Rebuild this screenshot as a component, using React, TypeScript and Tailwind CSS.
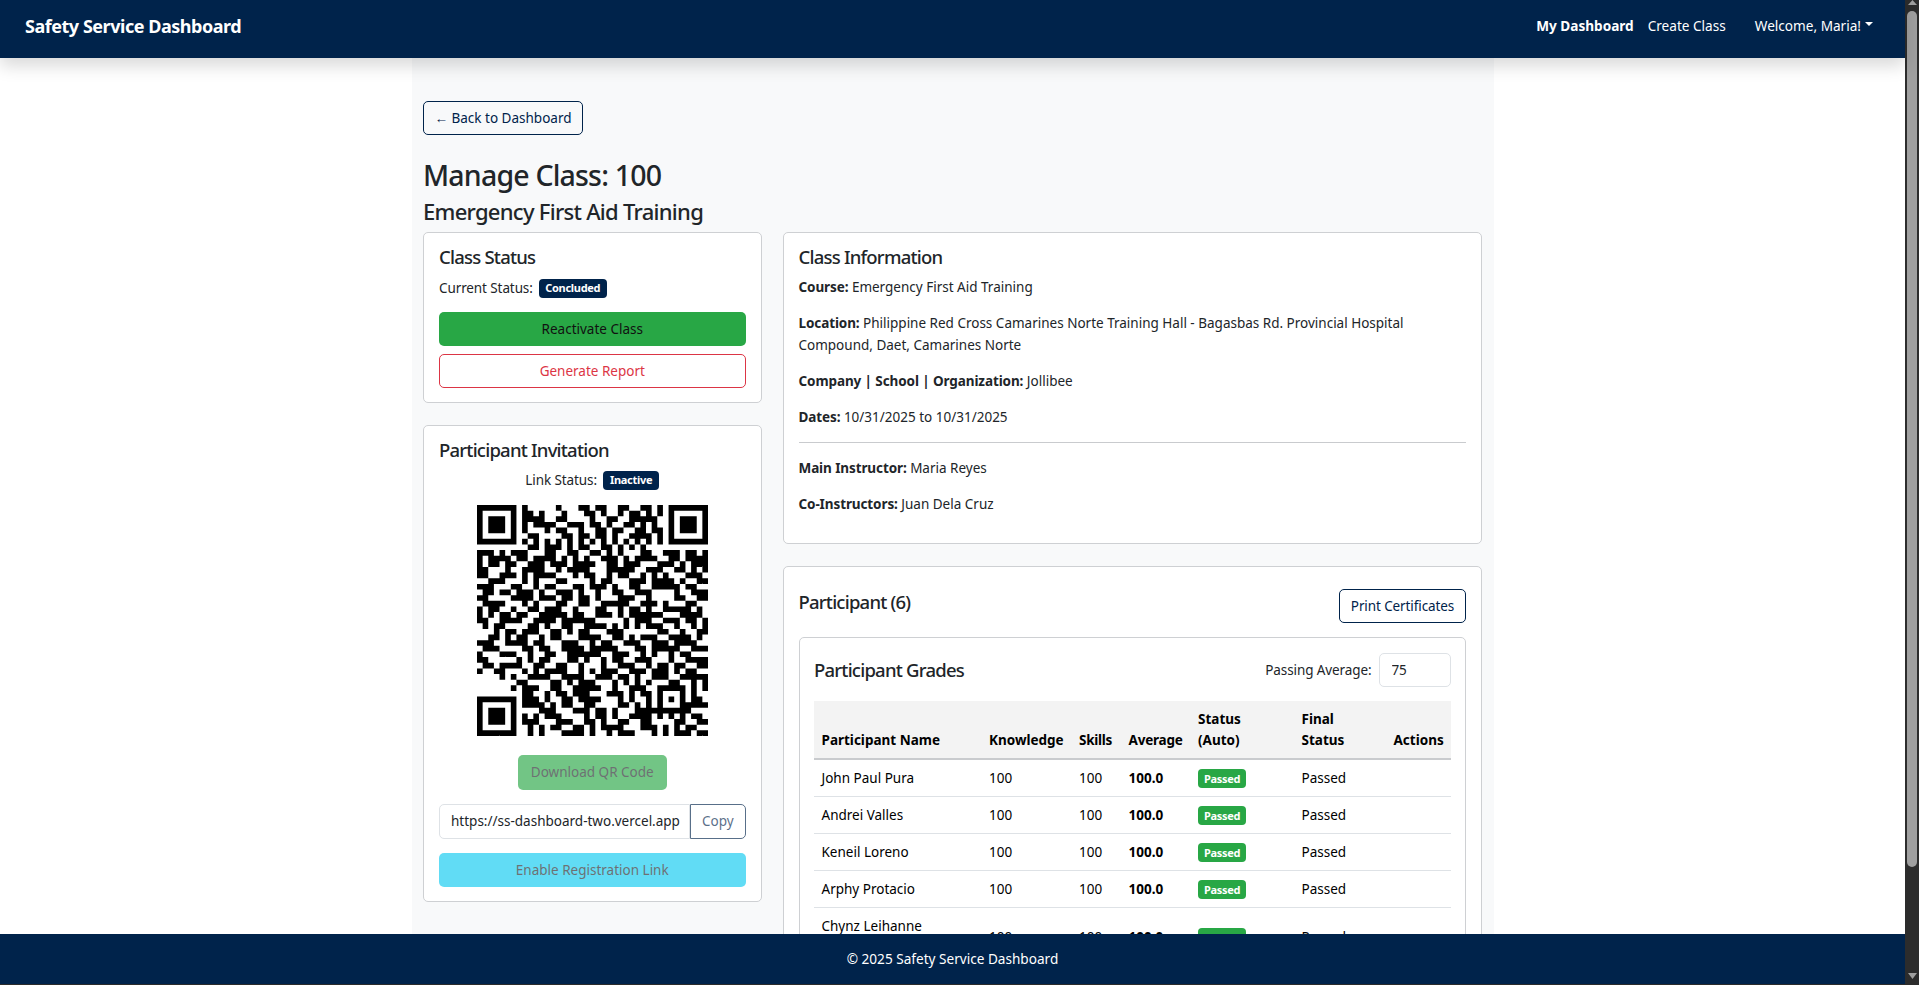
import React from "react";

const QR_ROWS = [
  "00000000111100100011100001100100001000000",
  "00000000100100010000110001011000000000000",
  "00000000111000110011000110011100000000000",
  "00000000011011001110011100110100000000000",
  "00000000110010110001110011001110000000000",
  "00000000011100011001101110011100000000000",
  "00000000101010101010101010101010100000000",
  "00000000011000111011001110011000000000000",
  "11111011100011011100110111000110011101100",
  "01100101101100011001001101110011001100111",
  "00110110011111100111100110001100111001100",
  "01110000111110011011000111011011100110011",
  "11001101110011000111110001100110011001110",
  "00111001111000110011101100011101100110011",
  "11100011001111000111001110011001110001100",
  "01101110011000111001110011001110011100111",
  "11000011100111011000111001110011001110011",
  "01111000111100110011100011100110110001100",
  "10011100011000111100011001101110011110011",
  "11000111100110001110011100110011100011100",
  "01110011001111100011100011100110011100111",
  "10011110011000111001111001100011100111000",
  "11001100111001100111000111011100110011110",
  "00110011100111000111110011000111001100011",
  "11100110011100011100011100111001110011100",
  "01110011100110011111001110001110011100111",
  "10001110011111001100110011100111000111000",
  "11000011001110001111000111001100111001111",
  "01101110011000110011110001110011100110011",
  "10011001110011110001100110011100110001100",
  "11100110011100011110011100011001110011110",
  "00111001100011100111100011100110001110011",
  "11001110111001100011110011001100000111000",
  "00000000110011100111000111001110000110011",
  "00000000111001100011110001110010000111000",
  "00000000111100111001100011001110110100111",
  "00000000001111000111001110001110000111000",
  "00000000110011100011100110011110000110110",
  "00000000111100111001110001100111111110011",
  "00000000011001100111001111000110001101100",
  "00000000111100011100111001110011100111011",
];

function QrCode() {
  let d = "";
  const inRect = (r: number, c: number, r0: number, c0: number, n: number) => r >= r0 && r < r0 + n && c >= c0 && c < c0 + n;
  for (let r = 0; r < 41; r++) {
    for (let c = 0; c < 41; c++) {
      const flip = (Math.floor(r / 6) + Math.floor(c / 6)) % 2 === 1;
      let on = (flip ? QR_ROWS[c][r] : QR_ROWS[r][c]) === "1";
      if (r === 6 && c > 7 && c < 33) on = c % 2 === 0;
      if (c === 6 && r > 7 && r < 33) on = r % 2 === 0;
      for (const [r0, c0] of [[0, 0], [0, 34], [34, 0]]) {
        if (inRect(r, c, r0 - (r0 ? 1 : 0), c0 - (c0 ? 1 : 0), 8)) on = false;
        if (inRect(r, c, r0, c0, 7)) {
          const dr = r - r0;
          const dc = c - c0;
          on = dr === 0 || dr === 6 || dc === 0 || dc === 6 || (dr >= 2 && dr <= 4 && dc >= 2 && dc <= 4);
        }
      }
      if (inRect(r, c, 32, 32, 5)) {
        const dr = r - 32;
        const dc = c - 32;
        on = dr === 0 || dr === 4 || dc === 0 || dc === 4 || (dr === 2 && dc === 2);
      }
      if (on) d += `M${c} ${r}h1v1h-1z`;
    }
  }
  return (
    <svg viewBox="0 0 41 41" className="block w-[231px] h-[231px]">
      <path d={d} fill="#000" />
    </svg>
  );
}

const card = "bg-white border border-[#ced0d3] rounded-[5px]";
const h5 = "text-[18.5px] leading-[24px] font-medium text-[#212529] tracking-[-0.78px]";

function Info({ label, children, cls = "mb-[14px]" }: { label: string; children: React.ReactNode; cls?: string }) {
  return (
    <p className={`${cls} text-[13.5px] leading-[22px] text-[#212529]`}>
      <b className="font-bold tracking-[-0.1px]">{label}</b> {children}
    </p>
  );
}

const people: [React.ReactNode, number][] = [
  ["John Paul Pura", 37],
  ["Andrei Valles", 37],
  ["Keneil Loreno", 37],
  ["Arphy Protacio", 37],
  [<>Chynz Leihanne<br />&nbsp;</>, 59],
];

export default function App() {
  return (
    <div className="flex h-[985px] w-full overflow-hidden bg-white [font-family:'Noto_Sans',sans-serif]">
      <div className="flex flex-col flex-1 min-w-0 h-full">
        <header className="relative z-10 flex items-center justify-between h-[58px] shrink-0 bg-[#00234b] pl-[25px] pr-[32px] pb-[6px] text-white shadow-[0_8px_16px_rgba(0,0,0,0.15)]">
          <span className="text-[18px] font-bold tracking-[-0.47px]">Safety Service Dashboard</span>
          <nav className="flex items-center text-[13.6px]">
            <span className="font-bold mr-[14px]">My Dashboard</span>
            <span className="mr-[29px]">Create Class</span>
            <span>Welcome, Maria!</span>
            <span className="ml-[4px] border-x-[4px] border-x-transparent border-t-[4px] border-t-white mb-[4px]" />
          </nav>
        </header>

        <main className="flex-1 min-h-0 overflow-hidden">
          <div className="w-[1082px] mx-auto bg-[#f8f9fa] px-[11.5px] pt-[43px] h-full">
            <button className="block h-[34px] w-[160px] rounded-[5px] border border-[#00234b] bg-transparent text-[13.5px] text-[#00234b]">← Back to Dashboard</button>
            <h1 className="mt-[21px] text-[28.5px] leading-[38px] font-medium text-[#212529] tracking-[-0.81px]">Manage Class: 100</h1>
            <h2 className="mt-[3px] text-[22px] leading-[29px] font-medium text-[#212529] tracking-[-0.72px]">Emergency First Aid Training</h2>
            <div className="flex gap-[21px] mt-[6px] items-start">
              <div className="w-[338.5px] shrink-0 flex flex-col gap-[22px]">
                <section className={`${card} h-[171px] px-[15px] pt-[12px]`}>
                  <h3 className={h5}>Class Status</h3>
                  <div className="flex items-center mt-[8px] text-[13.5px] leading-[22px] text-[#212529] tracking-[-0.1px]">
                    Current Status:
                    <span className="ml-[6px] inline-flex items-center h-[19px] px-[6.5px] rounded-[4px] bg-[#00234b] text-white text-[11px] font-bold tracking-[-0.3px]">Concluded</span>
                  </div>
                  <button className="block w-full h-[34px] mt-[13px] rounded-[5px] bg-[#28a745] text-[13.5px] text-[#111]">Reactivate Class</button>
                  <button className="block w-full h-[34px] mt-[8px] rounded-[5px] border border-[#dc3545] bg-white text-[13.5px] text-[#dc3545]">Generate Report</button>
                </section>

                <section className={`${card} h-[477px] px-[15px] pt-[12px]`}>
                  <h3 className={h5}>Participant Invitation</h3>
                  <div className="flex items-center justify-center mt-[7px] text-[13.5px] leading-[22px] text-[#212529] tracking-[-0.1px]">
                    Link Status:
                    <span className="ml-[6px] inline-flex items-center h-[19px] px-[7px] rounded-[4px] bg-[#00234b] text-white text-[11px] font-bold tracking-[-0.3px]">Inactive</span>
                  </div>
                  <div className="flex justify-center mt-[14px]"><QrCode /></div>
                  <div className="flex justify-center mt-[19px]">
                    <button className="h-[35px] w-[149px] rounded-[5px] bg-[#28a745] opacity-65 text-[13.5px] text-[#212529]">Download QR Code</button>
                  </div>
                  <div className="flex mt-[14px] h-[35px]">
                    <input readOnly value="https://ss-dashboard-two.vercel.app" className="w-[251px] min-w-0 border border-[#dee2e6] rounded-l-[5px] pl-[11px] pr-[2px] text-[13.5px] text-[#212529] bg-white outline-none" />
                    <button className="flex-1 border border-[#00234b] opacity-65 rounded-r-[5px] text-[13.5px] text-[#00234b]">Copy</button>
                  </div>
                  <button className="block w-full h-[34px] mt-[14px] rounded-[5px] bg-[#0dcaf0] opacity-65 text-[13.5px] text-[#212529]">Enable Registration Link</button>
                </section>
              </div>

              <div className="flex-1 min-w-0 flex flex-col gap-[22px]">
                <section className={`${card} h-[312px] px-[15px] pt-[12px]`}>
                  <h3 className={`${h5} mb-[7px]`}>Class Information</h3>
                  <Info label="Course:">Emergency First Aid Training</Info>
                  <Info label="Location:">Philippine Red Cross Camarines Norte Training Hall - Bagasbas Rd. Provincial Hospital Compound, Daet, Camarines Norte</Info>
                  <Info label="Company | School | Organization:">Jollibee</Info>
                  <Info label="Dates:" cls="mb-0">10/31/2025 to 10/31/2025</Info>
                  <hr className="mt-[14px] mb-[14px] border-0 border-t border-[#c9cbce]" />
                  <Info label="Main Instructor:">Maria Reyes</Info>
                  <Info label="Co-Instructors:">Juan Dela Cruz</Info>
                </section>

                <section className={`${card} px-[15px] pt-[22px] h-[500px]`}>
                  <div className="flex justify-between items-start">
                    <h3 className={`${h5} mt-[1px]`}>Participant (6)</h3>
                    <button className="h-[34px] w-[127px] rounded-[5px] border border-[#00234b] bg-white text-[13.5px] text-[#00234b] tracking-[-0.1px]">Print Certificates</button>
                  </div>
                  <div className={`${card} mt-[14px] px-[14.5px] pt-[15px] h-[400px]`}>
                    <div className="flex items-center justify-between h-[34px]">
                      <h3 className={h5}>Participant Grades</h3>
                      <div className="flex items-center text-[13.5px] text-[#212529] tracking-[-0.1px]">
                        Passing Average:
                        <input readOnly value="75" className="ml-[7px] w-[72px] h-[34px] border border-[#dee2e6] rounded-[5px] px-[12px] text-[13.5px] text-[#212529] bg-white outline-none" />
                      </div>
                    </div>
                    <table className="w-[637px] table-fixed mt-[14px] border-collapse text-[13.5px] text-black">
                      <colgroup>
                        <col className="w-[167.5px]" />
                        <col className="w-[90px]" />
                        <col className="w-[49.5px]" />
                        <col className="w-[69.5px]" />
                        <col className="w-[103.5px]" />
                        <col className="w-[92px]" />
                        <col className="w-[65px]" />
                      </colgroup>
                      <thead>
                        <tr className="h-[58px] bg-[#f3f3f3] border-b-2 border-[#c9cbce] align-bottom text-left leading-[21px]">
                          <th className="px-[7.5px] pb-[7px] font-bold">Participant Name</th>
                          <th className="px-[7.5px] pb-[7px] font-bold">Knowledge</th>
                          <th className="px-[7.5px] pb-[7px] font-bold tracking-[-0.3px]">Skills</th>
                          <th className="px-[7.5px] pb-[7px] font-bold tracking-[-0.2px]">Average</th>
                          <th className="px-[7.5px] pb-[7px] font-bold">Status<br />(Auto)</th>
                          <th className="px-[7.5px] pb-[7px] font-bold">Final<br />Status</th>
                          <th className="px-[7.5px] pb-[7px] font-bold text-right">Actions</th>
                        </tr>
                      </thead>
                      <tbody>
                        {people.map(([name, h], i) => (
                          <tr key={i} className="border-b border-[#dee2e6] leading-[21px]" style={{ height: h }}>
                            <td className="px-[7.5px] pt-[1px]">{name}</td>
                            <td className="px-[7.5px] pt-[1px]">100</td>
                            <td className="px-[7.5px] pt-[1px]">100</td>
                            <td className="px-[7.5px] pt-[1px] font-bold">100.0</td>
                            <td className="px-[7.5px] pt-[1px]">
                              <span className="inline-flex items-center justify-center w-[48px] h-[19px] rounded-[4px] bg-[#28a745] text-white text-[11px] font-bold tracking-[-0.3px]">Passed</span>
                            </td>
                            <td className="px-[7.5px] pt-[1px]">Passed</td>
                            <td className="px-[7.5px]" />
                          </tr>
                        ))}
                      </tbody>
                    </table>
                  </div>
                </section>
              </div>
            </div>
          </div>
        </main>

        <footer className="relative z-10 flex items-center justify-center h-[51px] shrink-0 bg-[#00234b] border-b border-[#2c2c2c] text-white text-[13.6px]">
          © 2025 Safety Service Dashboard
        </footer>
      </div>

      <div className="w-[14px] shrink-0 h-full bg-[#2c2c2c] flex flex-col items-center justify-between border-b border-[#2c2c2c]">
        <div className="flex flex-col items-center">
          <svg viewBox="0 0 9 5" className="block w-[9px] h-[5px]"><path d="M4.5 0 9 5H0z" fill="#9f9f9f" /></svg>
          <div className="w-[10px] h-[856px] mt-[6px] rounded-full bg-[#9f9f9f]" />
        </div>
        <svg viewBox="0 0 9 6" className="block w-[9px] h-[6px] mb-[5px]"><path d="M0 0h9L4.5 6z" fill="#9f9f9f" /></svg>
      </div>
    </div>
  );
}
